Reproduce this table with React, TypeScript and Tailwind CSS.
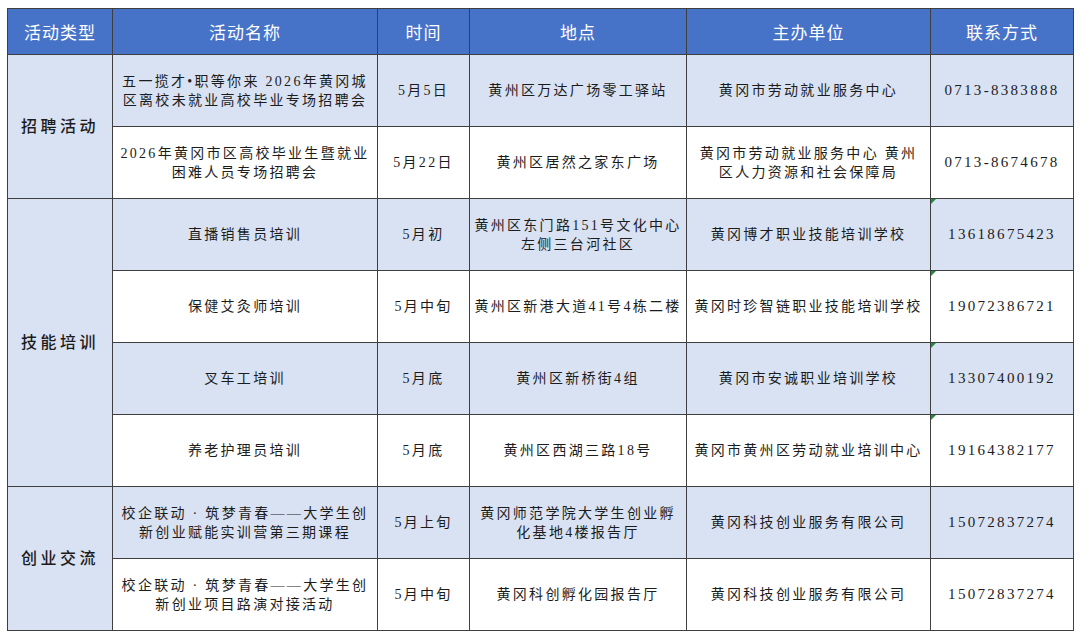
import React from "react";

type Row = {
  name: React.ReactNode;
  time: string;
  place: React.ReactNode;
  org: React.ReactNode;
  phone: string;
  marker?: boolean;
};

const groups: { type: string; rows: Row[] }[] = [
  {
    type: "招聘活动",
    rows: [
      {
        name: (
          <>
            五一揽才•职等你来 2026年黄冈城
            <br />
            区离校未就业高校毕业专场招聘会
          </>
        ),
        time: "5月5日",
        place: "黄州区万达广场零工驿站",
        org: "黄冈市劳动就业服务中心",
        phone: "0713-8383888",
      },
      {
        name: (
          <>
            2026年黄冈市区高校毕业生暨就业
            <br />
            困难人员专场招聘会
          </>
        ),
        time: "5月22日",
        place: "黄州区居然之家东广场",
        org: (
          <>
            黄冈市劳动就业服务中心 黄州
            <br />
            区人力资源和社会保障局
          </>
        ),
        phone: "0713-8674678",
      },
    ],
  },
  {
    type: "技能培训",
    rows: [
      {
        name: "直播销售员培训",
        time: "5月初",
        place: (
          <>
            黄州区东门路151号文化中心
            <br />
            左侧三台河社区
          </>
        ),
        org: "黄冈博才职业技能培训学校",
        phone: "13618675423",
        marker: true,
      },
      {
        name: "保健艾灸师培训",
        time: "5月中旬",
        place: "黄州区新港大道41号4栋二楼",
        org: "黄冈时珍智链职业技能培训学校",
        phone: "19072386721",
        marker: true,
      },
      {
        name: "叉车工培训",
        time: "5月底",
        place: "黄州区新桥街4组",
        org: "黄冈市安诚职业培训学校",
        phone: "13307400192",
        marker: true,
      },
      {
        name: "养老护理员培训",
        time: "5月底",
        place: "黄州区西湖三路18号",
        org: "黄冈市黄州区劳动就业培训中心",
        phone: "19164382177",
        marker: true,
      },
    ],
  },
  {
    type: "创业交流",
    rows: [
      {
        name: (
          <>
            校企联动 · 筑梦青春——大学生创
            <br />
            新创业赋能实训营第三期课程
          </>
        ),
        time: "5月上旬",
        place: (
          <>
            黄冈师范学院大学生创业孵
            <br />
            化基地4楼报告厅
          </>
        ),
        org: "黄冈科技创业服务有限公司",
        phone: "15072837274",
      },
      {
        name: (
          <>
            校企联动 · 筑梦青春——大学生创
            <br />
            新创业项目路演对接活动
          </>
        ),
        time: "5月中旬",
        place: "黄冈科创孵化园报告厅",
        org: "黄冈科技创业服务有限公司",
        phone: "15072837274",
      },
    ],
  },
];

const headers = ["活动类型", "活动名称", "时间", "地点", "主办单位", "联系方式"];

const cell =
  "border border-[#3f3f3f] text-center align-middle text-[14px] leading-[19px] tracking-[2.3px] text-[#1c1c1c] px-1";

export default function App() {
  let idx = 0;
  return (
    <div className="w-[1080px] h-[639px] bg-white pt-[8px] pl-[7px] font-['Liberation_Serif','Noto_Sans_CJK_SC',serif]">
      <table className="table-fixed border-collapse w-[1066px]">
        <colgroup>
          <col className="w-[105px]" />
          <col className="w-[265px]" />
          <col className="w-[92px]" />
          <col className="w-[217px]" />
          <col className="w-[244px]" />
          <col className="w-[143px]" />
        </colgroup>
        <thead>
          <tr className="h-[46px] bg-[#4673c8]">
            {headers.map((h) => (
              <th
                key={h}
                className="border border-[#3f3f3f] text-center align-middle font-normal text-white text-[17px] tracking-[1px] font-['Noto_Sans_CJK_SC',sans-serif]"
              >
                {h}
              </th>
            ))}
          </tr>
        </thead>
        <tbody>
          {groups.map((g) =>
            g.rows.map((r, i) => {
              const shaded = idx++ % 2 === 0;
              const bg = shaded ? "bg-[#d9e2f3]" : "bg-white";
              return (
                <tr key={g.type + i} className={`h-[72px] ${bg}`}>
                  {i === 0 && (
                    <td
                      rowSpan={g.rows.length}
                      className="border border-[#3f3f3f] bg-[#d9e2f3] text-center align-middle text-[16px] tracking-[3.5px] text-[#1c1c1c] font-medium"
                    >
                      {g.type}
                    </td>
                  )}
                  <td className={cell}>{r.name}</td>
                  <td className={cell}>{r.time}</td>
                  <td className={cell}>{r.place}</td>
                  <td className={cell}>{r.org}</td>
                  <td className={`${cell} relative tracking-[1.2px] text-[15px]`}>
                    {r.marker && (
                      <span className="absolute left-0 top-0 w-0 h-0 border-t-[5px] border-t-[#1f8a3a] border-r-[5px] border-r-transparent" />
                    )}
                    {r.phone}
                  </td>
                </tr>
              );
            })
          )}
        </tbody>
      </table>
    </div>
  );
}
